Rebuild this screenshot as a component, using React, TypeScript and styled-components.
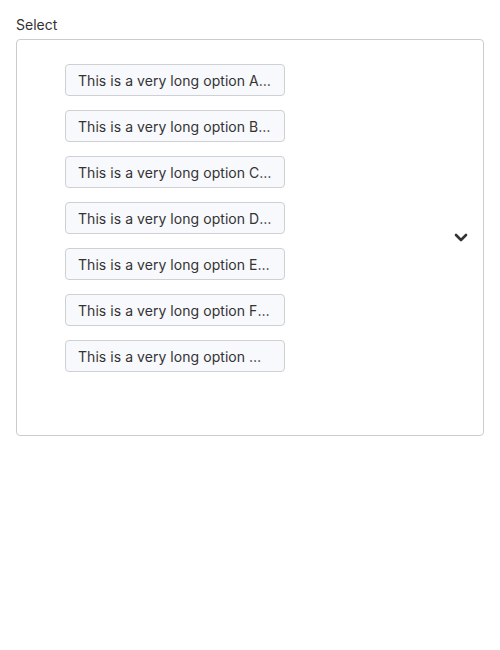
import React from "react";
import styled, { createGlobalStyle } from "styled-components";

const Global = createGlobalStyle`
  body {
    margin: 0;
    background: #ffffff;
    font-family: Inter, "Liberation Sans", sans-serif;
    color: #333333;
  }
`;

const Page = styled.div`
  padding: 15px 16px;
  display: flex;
  flex-direction: column;
  gap: 4px;
`;

const Label = styled.label`
  font-size: 14px;
  line-height: 20px;
  color: #333333;
`;

const SelectBox = styled.div`
  box-sizing: border-box;
  height: 397px;
  border: 1px solid #cccccc;
  border-radius: 4px;
  display: flex;
  align-items: center;
  padding: 0 15px 0 48px;
`;

const OptionList = styled.div`
  flex: 1;
  align-self: flex-start;
  display: flex;
  flex-direction: column;
  gap: 14px;
  padding-top: 24px;
`;

const Chip = styled.div`
  box-sizing: border-box;
  width: 220px;
  height: 32px;
  padding: 1px 12px 0;
  border: 1px solid #cfd0d4;
  border-radius: 4px;
  background: #f8f9fd;
  font-size: 14px;
  line-height: 29px;
  letter-spacing: 0.05px;
  color: #333333;
  white-space: nowrap;
  overflow: hidden;
  text-overflow: ellipsis;
`;

const Chevron = styled.svg`
  width: 14px;
  height: 10px;
  flex: none;
  margin-bottom: 2px;
`;

const options = [
  "This is a very long option A with extra text",
  "This is a very long option B with extra text",
  "This is a very long option C with extra text",
  "This is a very long option D with extra text",
  "This is a very long option E with extra text",
  "This is a very long option F with extra text",
  "This is a very long option WWW with extra text",
];

export default function App() {
  return (
    <>
      <Global />
      <Page>
        <Label>Select</Label>
        <SelectBox>
          <OptionList>
            {options.map((o, i) => (
              <Chip key={i} title={o}>{o}</Chip>
            ))}
          </OptionList>
          <Chevron viewBox="0 0 14 10">
            <polyline
              points="2,3 7,8 12,3"
              fill="none"
              stroke="#333333"
              strokeWidth="2.6"
              strokeLinecap="round"
              strokeLinejoin="round"
            />
          </Chevron>
        </SelectBox>
      </Page>
    </>
  );
}
